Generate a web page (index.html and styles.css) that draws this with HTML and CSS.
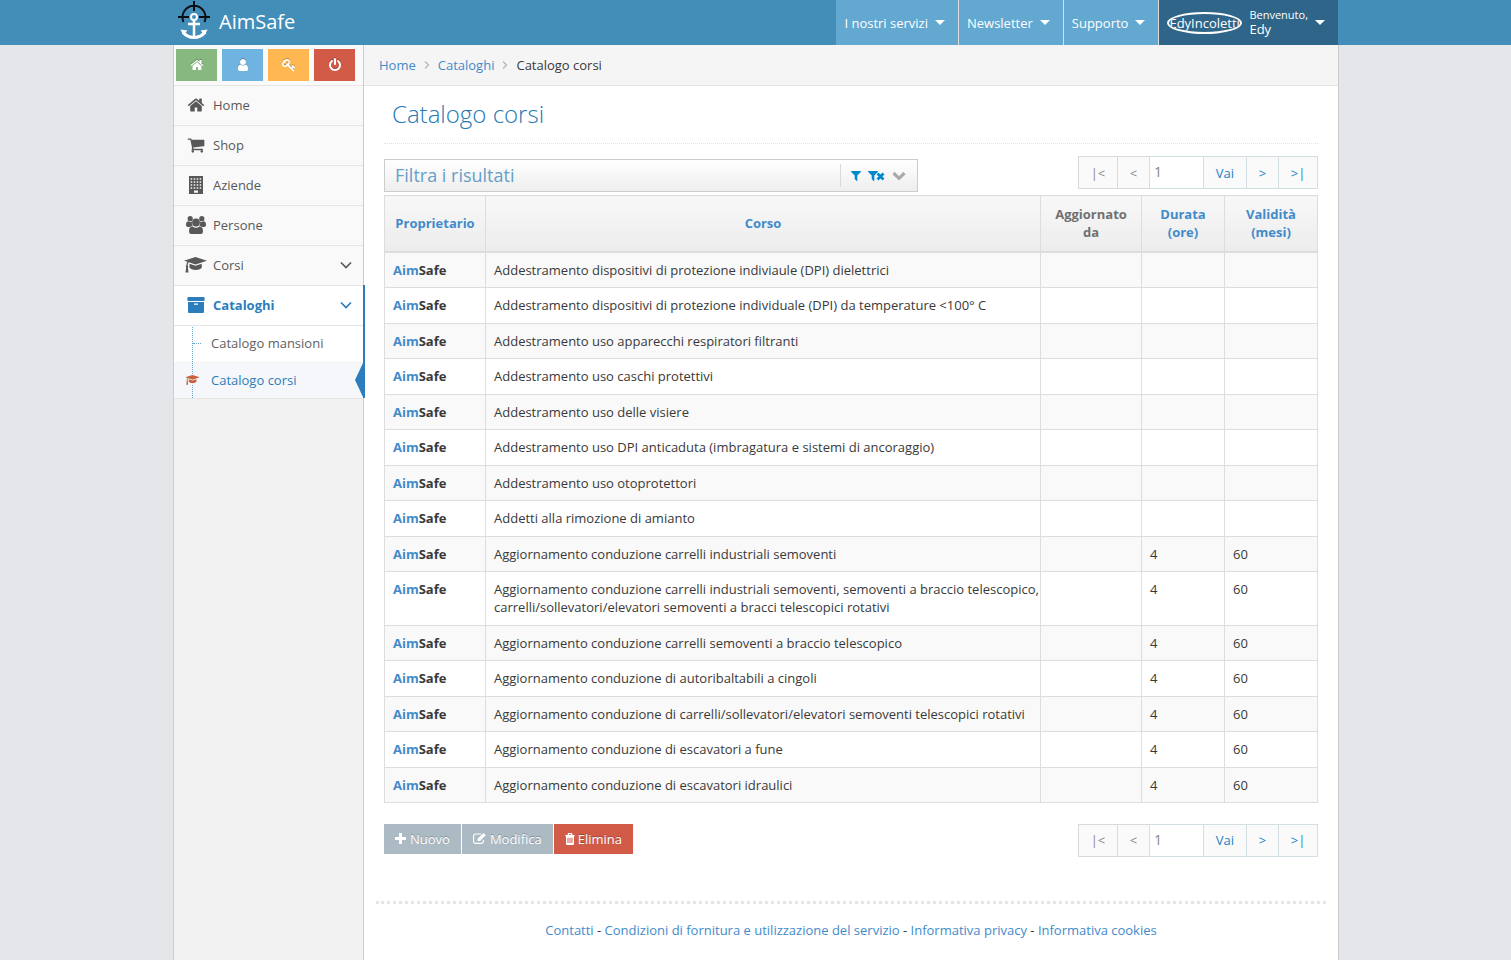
FILE: index.html
```html
<!DOCTYPE html>
<html lang="it">
<head>
<meta charset="utf-8">
<title>Catalogo corsi - AimSafe</title>
<link rel="stylesheet" href="styles.css">
</head>
<body>
<svg class="sprite" aria-hidden="true">
  <symbol id="i-home" viewBox="0 0 1792 1792"><path d="M1472 992v480q0 26-19 45t-45 19h-384v-384h-256v384h-384q-26 0-45-19t-19-45v-480q0-1 .5-3t.5-3l575-474 575 474q1 2 1 6zm223-69l-62 74q-8 9-21 11h-3q-13 0-21-7l-692-577-692 577q-12 8-24 7-13-2-21-11l-62-74q-8-10-7-23.5t11-21.5l719-599q32-26 76-26t76 26l244 204v-195q0-14 9-23t23-9h192q14 0 23 9t9 23v408l219 182q10 8 11 21.5t-7 23.5z"/></symbol>
  <symbol id="i-user" viewBox="0 0 1792 1792"><path d="M1536 1399q0 109-62.5 187t-150.5 78h-854q-88 0-150.5-78t-62.5-187q0-85 8.5-160.5t31.5-152 58.5-131 94-89 134.5-34.5q131 128 313 128t313-128q76 0 134.5 34.5t94 89 58.5 131 31.5 152 8.5 160.5zm-256-887q0 159-112.5 271.5t-271.5 112.5-271.5-112.5-112.5-271.5 112.5-271.5 271.5-112.5 271.5 112.5 112.5 271.5z"/></symbol>
  <symbol id="i-key" viewBox="0 0 1792 1792"><path d="M832 512q0-80-56-136t-136-56-136 56-56 136q0 42 19 83-41-19-83-19-80 0-136 56t-56 136 56 136 136 56 136-56 56-136q0-42-19-83 41 19 83 19 80 0 136-56t56-136zm851 704q0 17-49 66t-66 49q-9 0-28.5-16t-36.5-33-38.5-40-24.5-26l-96 96 220 220q28 28 28 68 0 42-39 81t-81 39q-40 0-68-28l-671-671q-176 131-365 131-163 0-265.5-102.5t-102.5-265.5q0-160 95-313t248-248 313-95q163 0 265.5 102.5t102.5 265.5q0 189-131 365l355 355 96-96q-3-3-26-24.5t-40-38.5-33-36.5-16-28.5q0-17 49-66t66-49q13 0 23 10 6 6 46 44.5t82 79.5 86.5 86 73 78 28.5 41z"/></symbol>
  <symbol id="i-off" viewBox="0 0 1792 1792"><path d="M1664 896q0 156-61 298t-164 245-245 164-298 61-298-61-245-164-164-245-61-298q0-182 80.5-343t226.5-270q43-32 95.5-25t83.5 50q32 42 24.5 94.5t-49.5 84.5q-98 74-151.5 181t-53.5 228q0 104 40.5 198.5t109.5 163.5 163.5 109.5 198.500 40.5 198.5-40.5 163.5-109.5 109.5-163.5 40.5-198.5q0-121-53.5-228t-151.5-181q-42-32-49.5-84.5t24.5-94.5q31-43 84-50t95 25q146 109 226.5 270t80.5 343zm-640-768v640q0 52-38 90t-90 38-90-38-38-90v-640q0-52 38-90t90-38 90 38 38 90z"/></symbol>
  <symbol id="i-cart" viewBox="0 0 1792 1792"><path d="M704 1536q0 52-38 90t-90 38-90-38-38-90 38-90 90-38 90 38 38 90zm896 0q0 52-38 90t-90 38-90-38-38-90 38-90 90-38 90 38 38 90zm128-1088v512q0 24-16.5 42.5t-40.5 21.5l-1044 122q13 60 13 70 0 16-24 64h920q26 0 45 19t19 45-19 45-45 19h-1024q-26 0-45-19t-19-45q0-11 8-31.5t16-36 21.5-40 15.5-29.5l-177-823h-204q-26 0-45-19t-19-45 19-45 45-19h256q16 0 28.5 6.5t19.5 15.5 13 24.5 8 26 5.5 29.5 4.5 26h1201q26 0 45 19t19 45z"/></symbol>
  <symbol id="i-building" viewBox="0 0 18 18"><path fill-rule="evenodd" d="M2 0h14v18H2zM3.700 2.200v1.500h1.500V2.200zM6.700 2.200v1.500h1.500V2.200zM9.700 2.200v1.500h1.500V2.200zM12.700 2.200v1.500h1.500V2.200zM3.700 5.200v1.500h1.500V5.200zM6.700 5.200v1.500h1.500V5.200zM9.700 5.200v1.500h1.500V5.200zM12.700 5.200v1.500h1.500V5.200zM3.700 8.200v1.500h1.500V8.200zM6.700 8.200v1.500h1.500V8.200zM9.700 8.200v1.500h1.500V8.200zM12.700 8.200v1.500h1.500V8.200zM3.700 11.200v1.500h1.500v-1.500zM6.700 11.200v1.500h1.500v-1.500zM9.700 11.200v1.500h1.500v-1.500zM12.700 11.200v1.500h1.500v-1.500zM7 14.500v2.300h4v-2.300z"/></symbol>
  <symbol id="i-users" viewBox="0 0 20 18"><circle cx="4.2" cy="2.7" r="2.6"/><circle cx="15.8" cy="2.7" r="2.6"/><path d="M2.2 5.2q2 1.4 3.8.4Q5.300 8 6.700 9.800Q5 9.800 4 11H2Q0 11 0 9q0-3.500 2.200-3.800zM17.800 5.200q-2 1.400-3.800.4Q14.700 8 13.300 9.800q1.700 0 2.700 1.200h2q2 0 2-2 0-3.500-2.200-3.800z"/><circle cx="10" cy="6.500" r="3.900"/><path d="M6.200 10.200q3.800 3 7.600 0Q17 10.500 17 15.500q0 2.500-2.400 2.500H5.400Q3 18 3 15.500q0-5 3.200-5.300z"/></symbol>
  <symbol id="i-cap" viewBox="0 0 23 16"><path d="M11.500 0L23 3.700 11.500 7.400 4.900 5.300Q3.800 6 3.600 8.200q1.200.9.300 2.200L4.500 15.500H1.500L2.200 10.400Q1.200 9.100 2.400 8.200 2.500 6 3.400 4.800L0 3.700z"/><path d="M5.600 6.800L11.500 8.700 17.600 6.800 17.900 10.300Q16.500 13 11.700 13 7 13 5.400 10.300z"/></symbol>
  <symbol id="i-archive" viewBox="0 0 18 16"><path fill-rule="evenodd" d="M.5 0h17v4H.5zM1 5h16v10q0 1-1 1H2q-1 0-1-1zM7 6.500v1.300h4V6.500z"/></symbol>
  <symbol id="i-down" viewBox="0 0 12 8"><path d="M1 1.500l5 5 5-5" fill="none" stroke="currentColor" stroke-width="1.700"/></symbol>
  <symbol id="i-chevron" viewBox="0 0 14 10"><path d="M1.500 2L7 7.300 12.500 2" fill="none" stroke="currentColor" stroke-width="3.200"/></symbol>
  <symbol id="i-right" viewBox="0 0 6 8"><path d="M1 .5L4.500 4 1 7.500" fill="none" stroke="currentColor" stroke-width="1.300"/></symbol>
  <symbol id="i-caret" viewBox="0 0 10 5"><path d="M0 0h10L5 5z"/></symbol>
  <symbol id="i-filter" viewBox="0 0 10 10"><path d="M.4 0h9.200q.7.300.2.900L6.300 4.600V9.700q-.3.600-.9 0L3.700 8V4.600L.2.900Q-.2.300.4 0z"/></symbol>
  <symbol id="i-filter-x" viewBox="0 0 17 10"><path d="M.4 0h9.200q.7.300.2.900L6.300 4.600V9.700q-.3.600-.9 0L3.700 8V4.600L.2.900Q-.2.300.4 0z"/><path d="M9.500 2.500l6 6M15.500 2.500l-6 6" stroke="currentColor" stroke-width="2.700"/></symbol>
  <symbol id="i-plus" viewBox="0 0 10 10"><path d="M3.700 0h2.600v3.700H10v2.600H6.300V10H3.700V6.300H0V3.700h3.700z"/></symbol>
  <symbol id="i-edit" viewBox="0 0 13 11"><path d="M8 1H2.500Q.6 1 .6 2.800v5.700q0 1.800 1.900 1.800h6q1.800 0 1.800-1.800V7" fill="none" stroke="currentColor" stroke-width="1.200"/><path d="M10.500 0l2.300 2.200L7 8H4.600V5.700z"/></symbol>
  <symbol id="i-trash" viewBox="0 0 10 12"><path d="M.3 2.700h9.400M3 2.500L3.500.7h3L7 2.500" fill="none" stroke="currentColor" stroke-width="1.300"/><path fill-rule="evenodd" d="M1 3h8v7.500Q9 12 8 12H2q-1 0-1-1.500zM2.500 4.700v5.300h1V4.700zM4.500 4.700v5.300h1V4.700zM6.500 4.700v5.300h1V4.700z"/></symbol>
</svg>

<header class="navbar">
  <div class="container navbar-inner">
    <a class="brand" href="#">
      <svg class="brand-logo" viewBox="0 0 34 40" aria-hidden="true">
        <g fill="none" stroke="#0b0f14" stroke-width="2"><path d="M6.500 22a11.500 11.500 0 1 1 21 0M17 1v10M1 17h11M22 17h11"/></g>
        <g fill="none" stroke="#fff"><circle cx="17" cy="17" r="3" stroke-width="2"/><path d="M17 20v17M11 24h12" stroke-width="2.500"/><path d="M6 32q4 5.500 11 5.500T28 32" stroke-width="3"/></g>
        <path fill="#fff" d="M3.500 29.500l7 1-4.500 4.500zM30.500 29.500l-7 1 4.500 4.500z"/>
      </svg>
      <span>AimSafe</span>
    </a>
    <nav class="top-menu">
      <a class="top-item" href="#">I nostri servizi <svg class="caret"><use href="#i-caret"/></svg></a>
      <a class="top-item" href="#">Newsletter <svg class="caret"><use href="#i-caret"/></svg></a>
      <a class="top-item" href="#">Supporto <svg class="caret"><use href="#i-caret"/></svg></a>
      <a class="top-item top-user" href="#">
        <span class="avatar">EdyIncoletti</span>
        <span class="user-info"><small>Benvenuto,</small>Edy</span>
        <svg class="caret"><use href="#i-caret"/></svg>
      </a>
    </nav>
  </div>
</header>

<div class="container page">
  <aside class="sidebar">
    <div class="shortcuts">
      <button class="shortcut green" type="button" aria-label="Home"><svg class="icon-sm"><use href="#i-home"/></svg></button>
      <button class="shortcut blue" type="button" aria-label="Profilo"><svg class="icon-sm"><use href="#i-user"/></svg></button>
      <button class="shortcut orange" type="button" aria-label="Password"><svg class="icon-sm"><use href="#i-key"/></svg></button>
      <button class="shortcut red" type="button" aria-label="Esci"><svg class="icon-sm"><use href="#i-off"/></svg></button>
    </div>
    <ul class="menu">
      <li><a class="menu-link" href="#"><span class="menu-icon"><svg class="icon-md"><use href="#i-home"/></svg></span>Home</a></li>
      <li><a class="menu-link" href="#"><span class="menu-icon"><svg class="icon-md"><use href="#i-cart"/></svg></span>Shop</a></li>
      <li><a class="menu-link" href="#"><span class="menu-icon"><svg class="icon-md"><use href="#i-building"/></svg></span>Aziende</a></li>
      <li><a class="menu-link" href="#"><span class="menu-icon"><svg class="icon-users"><use href="#i-users"/></svg></span>Persone</a></li>
      <li><a class="menu-link" href="#"><span class="menu-icon"><svg class="icon-cap"><use href="#i-cap"/></svg></span>Corsi<svg class="arrow"><use href="#i-down"/></svg></a></li>
      <li class="active">
        <a class="menu-link" href="#"><span class="menu-icon"><svg class="icon-archive"><use href="#i-archive"/></svg></span>Cataloghi<svg class="arrow"><use href="#i-down"/></svg></a>
        <ul class="submenu">
          <li><a class="sub-link" href="#">Catalogo mansioni</a></li>
          <li class="current"><a class="sub-link" href="#"><svg class="sub-icon"><use href="#i-cap"/></svg>Catalogo corsi</a></li>
        </ul>
      </li>
    </ul>
  </aside>

  <div class="main">
    <nav class="breadcrumb" aria-label="Percorso">
      <a href="#">Home</a>
      <svg class="crumb-sep"><use href="#i-right"/></svg>
      <a href="#">Cataloghi</a>
      <svg class="crumb-sep"><use href="#i-right"/></svg>
      <span>Catalogo corsi</span>
    </nav>

    <main class="content">
      <h1 class="title">Catalogo corsi</h1>

      <div class="toolbar">
        <section class="filter">
          <h2 class="filter-title">Filtra i risultati</h2>
          <div class="filter-tools">
            <button type="button" class="tool" aria-label="Filtra"><svg class="tool-filter"><use href="#i-filter"/></svg></button>
            <button type="button" class="tool" aria-label="Rimuovi filtro"><svg class="tool-clear"><use href="#i-filter-x"/></svg></button>
            <button type="button" class="tool tool-grey" aria-label="Espandi"><svg class="tool-open"><use href="#i-chevron"/></svg></button>
          </div>
        </section>
        <div class="pager">
          <button type="button" class="page-btn w-edge" disabled>|&lt;</button>
          <button type="button" class="page-btn" disabled>&lt;</button>
          <input class="page-input" type="text" value="1" aria-label="Pagina">
          <button type="button" class="page-btn w-go">Vai</button>
          <button type="button" class="page-btn">&gt;</button>
          <button type="button" class="page-btn w-edge">&gt;|</button>
        </div>
      </div>

      <table class="grid">
        <colgroup><col class="c-owner"><col><col class="c-upd"><col class="c-dur"><col class="c-val"></colgroup>
        <thead>
          <tr><th><a href="#">Proprietario</a></th><th><a href="#">Corso</a></th><th>Aggiornato da</th><th><a href="#">Durata (ore)</a></th><th><a href="#">Validità (mesi)</a></th></tr>
        </thead>
        <tbody>
          <tr><td class="owner"><b>Aim</b>Safe</td><td class="course">Addestramento dispositivi di protezione indiviaule (DPI) dielettrici</td><td></td><td></td><td></td></tr>
          <tr><td class="owner"><b>Aim</b>Safe</td><td class="course">Addestramento dispositivi di protezione individuale (DPI) da temperature &lt;100° C</td><td></td><td></td><td></td></tr>
          <tr><td class="owner"><b>Aim</b>Safe</td><td class="course">Addestramento uso apparecchi respiratori filtranti</td><td></td><td></td><td></td></tr>
          <tr><td class="owner"><b>Aim</b>Safe</td><td class="course">Addestramento uso caschi protettivi</td><td></td><td></td><td></td></tr>
          <tr><td class="owner"><b>Aim</b>Safe</td><td class="course">Addestramento uso delle visiere</td><td></td><td></td><td></td></tr>
          <tr><td class="owner"><b>Aim</b>Safe</td><td class="course">Addestramento uso DPI anticaduta (imbragatura e sistemi di ancoraggio)</td><td></td><td></td><td></td></tr>
          <tr><td class="owner"><b>Aim</b>Safe</td><td class="course">Addestramento uso otoprotettori</td><td></td><td></td><td></td></tr>
          <tr><td class="owner"><b>Aim</b>Safe</td><td class="course">Addetti alla rimozione di amianto</td><td></td><td></td><td></td></tr>
          <tr><td class="owner"><b>Aim</b>Safe</td><td class="course">Aggiornamento conduzione carrelli industriali semoventi</td><td></td><td>4</td><td>60</td></tr>
          <tr><td class="owner"><b>Aim</b>Safe</td><td class="course">Aggiornamento conduzione carrelli industriali semoventi, semoventi a braccio telescopico, carrelli/sollevatori/elevatori semoventi a bracci telescopici rotativi</td><td></td><td>4</td><td>60</td></tr>
          <tr><td class="owner"><b>Aim</b>Safe</td><td class="course">Aggiornamento conduzione carrelli semoventi a braccio telescopico</td><td></td><td>4</td><td>60</td></tr>
          <tr><td class="owner"><b>Aim</b>Safe</td><td class="course">Aggiornamento conduzione di autoribaltabili a cingoli</td><td></td><td>4</td><td>60</td></tr>
          <tr><td class="owner"><b>Aim</b>Safe</td><td class="course">Aggiornamento conduzione di carrelli/sollevatori/elevatori semoventi telescopici rotativi</td><td></td><td>4</td><td>60</td></tr>
          <tr><td class="owner"><b>Aim</b>Safe</td><td class="course">Aggiornamento conduzione di escavatori a fune</td><td></td><td>4</td><td>60</td></tr>
          <tr><td class="owner"><b>Aim</b>Safe</td><td class="course">Aggiornamento conduzione di escavatori idraulici</td><td></td><td>4</td><td>60</td></tr>
        </tbody>
      </table>

      <div class="actions">
        <div class="buttons">
          <button type="button" class="btn"><svg class="btn-plus"><use href="#i-plus"/></svg>Nuovo</button>
          <button type="button" class="btn"><svg class="btn-edit"><use href="#i-edit"/></svg>Modifica</button>
          <button type="button" class="btn btn-danger"><svg class="btn-trash"><use href="#i-trash"/></svg>Elimina</button>
        </div>
        <div class="pager">
          <button type="button" class="page-btn w-edge" disabled>|&lt;</button>
          <button type="button" class="page-btn" disabled>&lt;</button>
          <input class="page-input" type="text" value="1" aria-label="Pagina">
          <button type="button" class="page-btn w-go">Vai</button>
          <button type="button" class="page-btn">&gt;</button>
          <button type="button" class="page-btn w-edge">&gt;|</button>
        </div>
      </div>
    </main>

    <footer class="footer">
      <a href="#">Contatti</a> - <a href="#">Condizioni di fornitura e utilizzazione del servizio</a> - <a href="#">Informativa privacy</a> - <a href="#">Informativa cookies</a>
    </footer>
  </div>
</div>
</body>
</html>
```
FILE: styles.css
```css
* { box-sizing: border-box; }

body {
  margin: 0;
  min-height: 100vh;
  display: flex;
  flex-direction: column;
  background: #e4e6e9;
  color: #393939;
  font: 13px/18px "Open Sans", "Noto Sans", sans-serif;
}

a { color: #428bca; text-decoration: none; }
ul { list-style: none; margin: 0; padding: 0; }
button, input { font: inherit; }
svg { display: block; flex: none; fill: currentColor; }
.sprite { position: absolute; width: 0; height: 0; }

.container { width: 100%; max-width: 1165px; margin: 0 auto; }

/* Top bar */
.navbar { background: #438eb9; }
.navbar-inner { display: flex; justify-content: space-between; height: 45px; }
.brand { display: flex; align-items: flex-start; gap: 8px; padding-left: 4px; color: #fff; font-size: 20px; line-height: 44px; }
.brand-logo { width: 34px; height: 40px; }
.top-menu { display: flex; }
.top-item { display: flex; align-items: center; gap: 7px; padding: 0 13px 0 8px; background: #62a8d1; color: #fff; }
.top-item + .top-item { border-left: 1px solid #ddd; }
.top-item.top-user { background: #2e6589; }
.caret { width: 10px; height: 5px; }
.avatar { width: 75px; height: 22px; border: 2px solid #fff; border-radius: 50%; overflow: hidden; line-height: 18px; }
.user-info { display: flex; flex-direction: column; line-height: 15px; padding-bottom: 2px; }
.user-info small { font-size: 11px; }

/* Page frame */
.page { flex: 1; display: flex; background: #fff; border-left: 1px solid #ccc; box-shadow: 1px 0 0 #ccc; }
.sidebar { flex: none; width: 190px; background: #f2f2f2; border-right: 1px solid #ccc; }
.main { flex: 1; min-width: 0; }

.shortcuts { display: flex; gap: 5px; height: 40px; padding: 4px 2px; background: #fafafa; }
.shortcut { display: flex; align-items: center; justify-content: center; width: 41px; height: 32px; border: 0; padding: 0; color: #fff; }
.shortcut svg { filter: drop-shadow(0 -1px 0 rgba(0, 0, 0, .25)); }
.icon-sm { width: 14px; height: 14px; }
.green { background: #87b87f; }
.blue { background: #6fb3e0; }
.orange { background: #ffb752; }
.red { background: #d15b47; }

.menu > li { border-top: 1px solid #e5e5e5; }
.menu-link { display: flex; align-items: center; height: 39px; padding: 0 11px 1px 6px; background: #f9f9f9; color: #585858; }
.menu-icon { display: flex; justify-content: center; width: 31px; margin-right: 2px; }
.icon-md { width: 18px; height: 18px; }
.icon-users { width: 20px; height: 18px; }
.icon-cap { width: 23px; height: 16px; }
.icon-archive { width: 18px; height: 16px; }
.arrow { width: 12px; height: 8px; margin-left: auto; }

.active { position: relative; border-bottom: 1px solid #e5e5e5; }
.active::after { content: ""; position: absolute; top: -1px; bottom: 0; right: -2px; width: 2px; background: #2b7dbc; }
.active > .menu-link { background: #fff; color: #2b7dbc; font-weight: 700; }
.submenu { position: relative; background: #fff; border-top: 1px solid #e5e5e5; }
.submenu::before { content: ""; position: absolute; z-index: 1; left: 18px; top: 1px; bottom: 0; border-left: 1px dotted #6aa5cf; }
.submenu li { position: relative; }
.submenu li + li { border-top: 1px dotted #e4e4e4; }
.submenu li:first-child::before { content: ""; position: absolute; left: 19px; top: 17px; width: 8px; border-top: 1px dotted #6aa5cf; }
.sub-link { display: flex; align-items: center; height: 35px; padding: 0 0 2px 37px; color: #616161; }
.submenu li:first-child .sub-link { height: 36px; }
.current .sub-link { background: #f5f7fa; color: #2b7dbc; }
.current::after { content: ""; position: absolute; top: 0; right: 0; border: solid transparent; border-width: 17px 8px 17px 0; border-right-color: #2b7dbc; }
.sub-icon { position: absolute; z-index: 2; left: 11px; top: 12px; width: 15px; height: 10px; color: #c86139; background: #f5f7fa; }

.breadcrumb { display: flex; align-items: center; gap: 8px; height: 41px; padding: 0 15px; background: #f5f5f5; border-bottom: 1px solid #e5e5e5; }
.crumb-sep { width: 6px; height: 8px; color: #b2b6bf; }

/* Content */
.content { padding: 8px 20px 0; }
.title { margin: 0 0 12px; padding: 0 8px 9px; border-bottom: 1px dotted #e2e2e2; color: #2679b5; font-size: 24px; font-weight: 300; line-height: 40px; }
.toolbar { display: flex; justify-content: space-between; align-items: flex-end; gap: 16px; min-height: 36px; margin-bottom: 3px; }
.filter { display: flex; align-items: center; flex: 0 1 534px; height: 33px; border: 1px solid #ccc; background: linear-gradient(#fff, #eee); }
.filter-title { flex: 1; margin: 0; padding: 0 0 2px 10px; color: #669fc7; font-size: 18px; font-weight: 400; line-height: 24px; }
.filter-tools { display: flex; align-items: center; gap: 7px; height: 23px; padding: 0 11px 0 10px; border-left: 1px solid #d9d9d9; }
.tool { padding: 0; border: 0; background: none; color: #08c; }
.tool-grey { color: #aaa; }
.tool-filter { width: 10px; height: 10px; }
.tool-clear { width: 17px; height: 10px; }
.tool-open { width: 14px; height: 10px; }

.pager { display: flex; align-self: flex-start; }
.page-btn { width: 33px; height: 33px; padding: 0; border: 1px solid #d4dfe3; background: #fafafa; color: #2283c5; }
.page-btn:disabled { border-color: #d9d9d9; color: #888; }
.page-btn + .page-btn, .page-btn + .page-input, .page-input + .page-btn { margin-left: -1px; }
.w-edge { width: 40px; }
.w-go { width: 44px; }
.page-input { width: 55px; height: 33px; padding: 0 4px 2px; border: 1px solid #d4dfe3; background: #fff; color: #858585; font-size: 14px; }

.grid { width: 100%; table-layout: fixed; border-collapse: collapse; }
.c-owner { width: 101px; }
.c-upd { width: 101px; }
.c-dur { width: 83px; }
.c-val { width: 93px; }
.grid th, .grid td { padding: 8px; border: 1px solid #ddd; }
.grid th { border-bottom-width: 2px; background: linear-gradient(#f8f8f8, #ececec); color: #707070; font-weight: 700; }
.grid thead tr { height: 56px; }
.grid td { vertical-align: top; }
.grid td.course { padding-right: 0; }
.grid tbody tr:nth-child(odd) { background: #f9f9f9; }
.grid tbody tr:nth-child(even) td { padding-bottom: 9px; }
.owner { font-weight: 700; }
.owner b { color: #428bca; font-weight: 700; }

.actions { display: flex; justify-content: space-between; margin-top: 21px; }
.buttons { display: flex; align-items: flex-start; gap: 1px; }
.btn { display: flex; align-items: center; gap: 4px; height: 30px; padding: 0 11px; border: 0; background: #abbac3; color: #fff; text-shadow: 0 -1px 0 rgba(0, 0, 0, .25); }
.btn-danger { gap: 3px; background: #d15b47; }
.btn-plus { width: 11px; height: 11px; }
.btn-edit { width: 13px; height: 11px; }
.btn-trash { width: 10px; height: 12px; }

.footer { margin: 44px 12px 0; padding: 17px 0 21px; border-top: 3px dotted #e5e5e5; text-align: center; }
```
